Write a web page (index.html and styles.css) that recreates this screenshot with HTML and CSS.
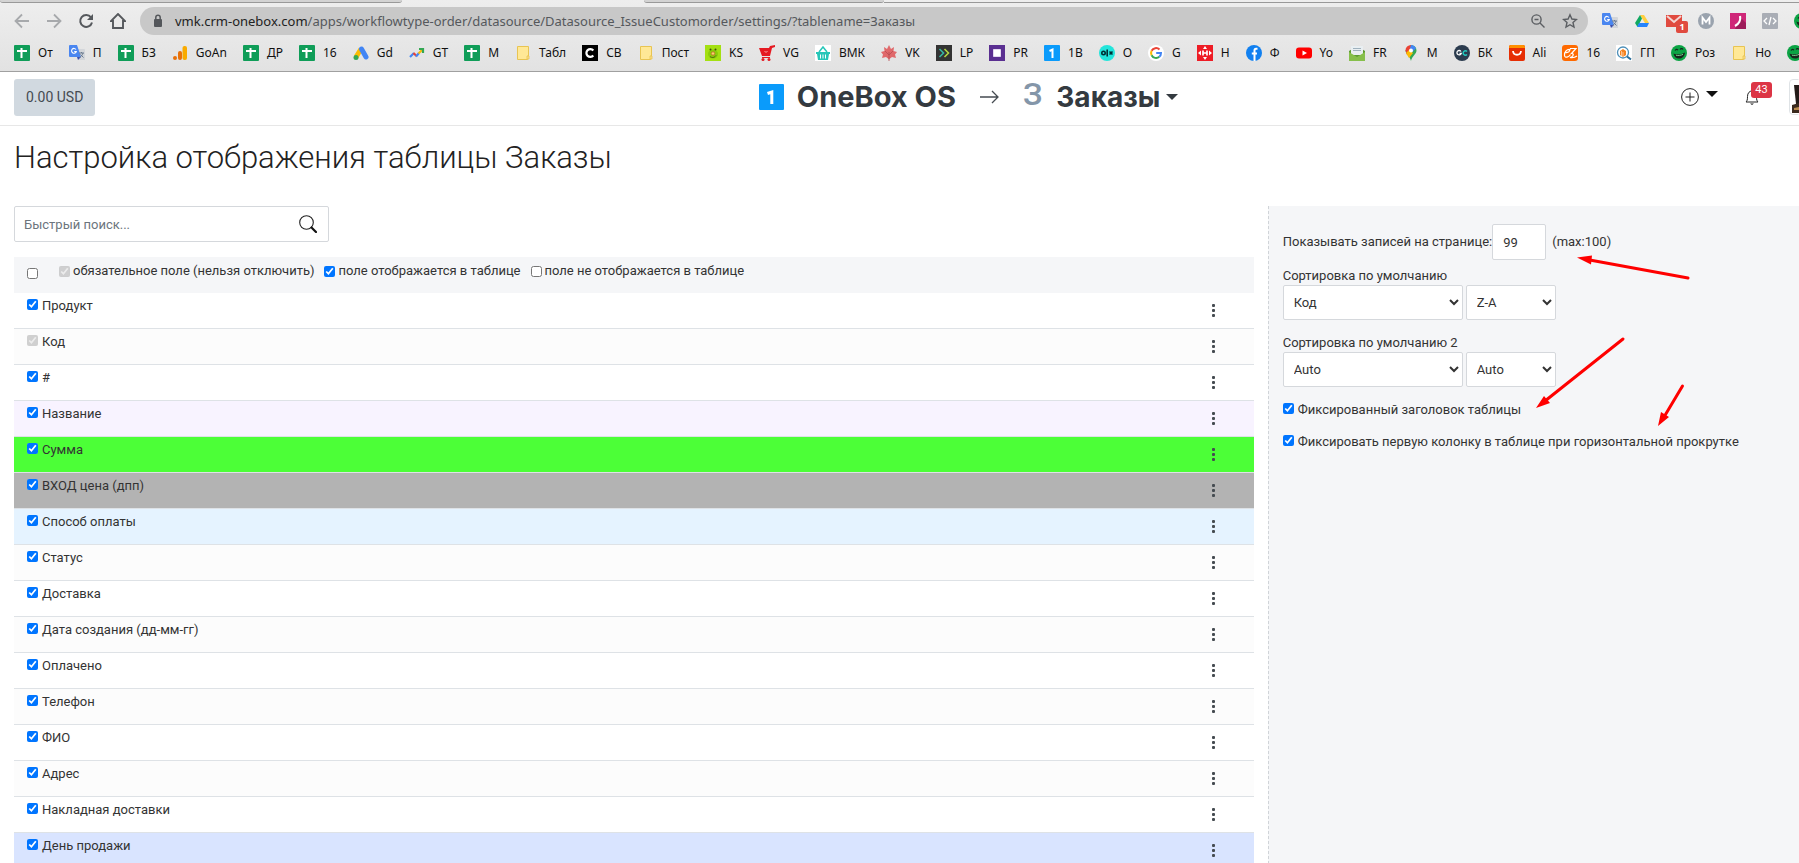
FILE: index.html
```html
<!DOCTYPE html>
<html lang="ru">
<head>
<meta charset="utf-8">
<title>Настройка отображения таблицы Заказы</title>
<link rel="stylesheet" href="styles.css">
</head>
<body>
<svg class="defs" aria-hidden="true">
  <symbol id="sheet" viewBox="0 0 16 16"><rect width="16" height="16" rx="1" fill="#0f9d58"/><path d="M3 6h10M7.500 3v10" stroke="#fff" stroke-width="2"/></symbol>
  <symbol id="note" viewBox="0 0 16 16"><path d="M2.500 1.500h11v9.500h-1v3.500h-10z" fill="#ffe896" stroke="#e8c452"/><path d="M12 11h2v3h-2z" fill="#ffe08a" stroke="#e8c452" stroke-width=".8"/></symbol>
  <symbol id="translate" viewBox="0 0 16 16"><path d="M7 4h8a1 1 0 0 1 1 1v10h-6z" fill="#d3d6da"/><path d="M1 0h7l4 12H1a1 1 0 0 1-1-1V1a1 1 0 0 1 1-1z" fill="#4a86f0"/><path d="M8 12h4l-3 3z" fill="#3a4fb0"/><path d="M7 4.500A2.400 2.400 0 1 0 7.300 6.500H5.200" fill="none" stroke="#fff" stroke-width="1.100"/><path d="M10 8h5M12.500 7v1M14 8c-.5 2-2 3.500-3.500 4.500M11.500 9.500l3 3" fill="none" stroke="#6a7a90"/></symbol>
  <symbol id="face" viewBox="0 0 16 16"><circle cx="8" cy="8" r="8" fill="#0ba344"/><path d="M2.500 8.500c3 1.500 8 1 11.500-1-.5 4-3 6-6 6s-5-2-5.500-5z" fill="#17251c"/><path d="M4 5.500c1-1.500 2-1.500 3-.3M9 4.500c1-1.300 2.500-1 3 0" fill="none" stroke="#17251c" stroke-width="1.200"/><path d="M5 10.200c2 .5 5 .2 7-.8" stroke="#7bd692" fill="none"/></symbol>
</svg>

<header class="browser">
  <div class="tabs"><i class="tab"></i><i class="tab-active"></i><i class="tab"></i><i class="tab-rest"></i></div>
  <div class="toolbar">
    <nav class="nav">
      <button class="plain" aria-label="Назад"><svg class="i16" viewBox="0 0 16 16" fill="none" stroke="#a7a9ac" stroke-width="1.800"><path d="M15 8H2M8 1.500L1.500 8 8 14.500"/></svg></button>
      <button class="plain" aria-label="Вперёд"><svg class="i16" viewBox="0 0 16 16" fill="none" stroke="#a7a9ac" stroke-width="1.800"><path d="M1 8h13M8 1.500L14.500 8 8 14.500"/></svg></button>
      <button class="plain" aria-label="Обновить"><svg class="i16" viewBox="0 0 16 16"><path d="M13 4.300A6 6 0 1 0 14 9.500" fill="none" stroke="#55585c" stroke-width="2"/><path d="M15 1v6H9z" fill="#55585c"/></svg></button>
      <button class="plain" aria-label="Домой"><svg class="i16" viewBox="0 0 16 16"><path d="M3 15V8H1l7-7 7 7h-2v7z" fill="none" stroke="#55585c" stroke-width="1.900"/></svg></button>
    </nav>
    <div class="address">
      <svg class="lock" viewBox="0 0 10 14"><rect x="1" y="5" width="8" height="8" rx="1" fill="#54575b"/><path d="M2.800 6V3.500a2.200 2.200 0 0 1 4.400 0V6" fill="none" stroke="#54575b" stroke-width="1.500"/></svg>
      <span class="url"><span class="host">vmk.crm-onebox.com</span>/apps/workflowtype-order/datasource/Datasource_IssueCustomorder/settings/?tablename=Заказы</span>
      <button class="plain" aria-label="Масштаб"><svg class="i16" viewBox="0 0 16 16" fill="none" stroke="#5b5e62" stroke-width="1.400"><circle cx="6.500" cy="6.500" r="4.600"/><path d="M10 10l4.500 4.500M4.500 6.500h4"/></svg></button>
      <button class="plain star" aria-label="В закладки"><svg class="i16" viewBox="0 0 16 16"><path d="M8 1.800l1.900 4.200 4.500.5-3.400 3 1 4.500L8 11.700 4 14l1-4.500-3.400-3L6.100 6z" fill="none" stroke="#5b5e62" stroke-width="1.400"/></svg></button>
    </div>
    <div class="extensions">
      <svg class="i16"><use href="#translate"/></svg>
      <svg class="i16" viewBox="0 0 16 16"><path d="M6 2h4l5 8h-4z" fill="#ffcf3f"/><path d="M6 2l2 3.500L3.500 14 1 10z" fill="#11a861"/><path d="M5 10h10l-2 4H3z" fill="#2684fc"/></svg>
      <span class="mail"><svg class="i16" viewBox="0 0 16 16"><path d="M0 2h16v12H0z" fill="#e04a3f"/><path d="M1 3l7 6 7-6" fill="none" stroke="#f3d5d2" stroke-width="2"/></svg><b class="mail-count">1</b></span>
      <svg class="i16" viewBox="0 0 16 16"><circle cx="8" cy="8" r="8" fill="#9aa3ae"/><path d="M4.500 11.500v-7L8 9l3.500-4.500v7" fill="none" stroke="#fff" stroke-width="1.800"/></svg>
      <svg class="i16" viewBox="0 0 16 16"><path d="M0 0h16v16H0z" fill="#cf2778"/><path d="M11 5l5 5v6H5z" fill="#9c1b59"/><path d="M10 3c1 4-1 8-5 10" fill="none" stroke="#fff" stroke-width="2.200"/></svg>
      <svg class="i16" viewBox="0 0 16 16"><rect width="16" height="16" rx="1" fill="#a9adb5"/><path d="M5 5L2 8l3 3M11 5l3 3-3 3M9 4l-2 8" fill="none" stroke="#fff" stroke-width="1.300"/></svg>
      <svg class="i16"><use href="#face"/></svg>
    </div>
  </div>
  <nav class="bookmarks">
    <a href="#"><svg class="i16"><use href="#sheet"/></svg>От</a>
    <a href="#"><svg class="i16"><use href="#translate"/></svg>П</a>
    <a href="#"><svg class="i16"><use href="#sheet"/></svg>БЗ</a>
    <a href="#"><svg class="i16" viewBox="0 0 16 16"><circle cx="3" cy="13" r="2" fill="#e8710a"/><rect x="6" y="6" width="4" height="9" rx="2" fill="#e8710a"/><rect x="10.500" y="1" width="4.500" height="14" rx="2" fill="#f9ab00"/></svg>GoAn</a>
    <a href="#"><svg class="i16"><use href="#sheet"/></svg>ДР</a>
    <a href="#"><svg class="i16"><use href="#sheet"/></svg>16</a>
    <a href="#"><svg class="i16" viewBox="0 0 16 16"><path d="M3 12L8 4" stroke="#fbbc04" stroke-width="5"/><path d="M8.500 4L13 12" stroke="#4285f4" stroke-width="5" stroke-linecap="round"/><circle cx="3" cy="12.500" r="2.500" fill="#34a853"/></svg>Gd</a>
    <a href="#"><svg class="i16" viewBox="0 0 16 16" fill="none" stroke-width="2.200"><path d="M1 12l4-4" stroke="#4285f4"/><path d="M4.500 8l3 3" stroke="#ea4335"/><path d="M7 11.500L10 8" stroke="#4285f4"/><path d="M9.500 8.500L13 5" stroke="#fbbc04"/><path d="M10 4h4v4" stroke="#34a853"/></svg>GT</a>
    <a href="#"><svg class="i16"><use href="#sheet"/></svg>М</a>
    <a href="#"><svg class="i16"><use href="#note"/></svg>Табл</a>
    <a href="#"><svg class="i16" viewBox="0 0 16 16"><path d="M0 0h16v16H0z"/><path d="M11.300 5.500A3.900 3.900 0 1 0 11.300 10.500" fill="none" stroke="#fff" stroke-width="2.200"/></svg>СВ</a>
    <a href="#"><svg class="i16"><use href="#note"/></svg>Пост</a>
    <a href="#"><svg class="i16" viewBox="0 0 16 16"><path d="M0 0h16v16H0z" fill="#a4e012"/><ellipse cx="8" cy="9" rx="5" ry="4.500" fill="#8acb0a"/><circle cx="8" cy="8.500" r="1.700" fill="#f5d76e" stroke="#c55b2b" stroke-width=".7"/><circle cx="5.500" cy="4.500" r="1" fill="#40500c"/><circle cx="10.500" cy="4.500" r="1" fill="#40500c"/><path d="M5 11.500c2 1.500 4 1.500 6-1" fill="none" stroke="#4a6512"/></svg>KS</a>
    <a href="#"><svg class="i16" viewBox="0 0 16 16"><path d="M0 3h10l1-2 5-1v2l-3 1-2 8H3z" fill="#e51a22"/><path d="M3 12h8v1H3z" fill="#e51a22"/><circle cx="4" cy="14.500" r="1.500" fill="#e51a22"/><circle cx="10" cy="14.500" r="1.500" fill="#e51a22"/><path d="M5.500 6l1.500 1.500L8.500 6" stroke="#f7a9ab" fill="none"/></svg>VG</a>
    <a href="#"><svg class="i16" viewBox="0 0 16 16"><path d="M0 0h16v16H0z" fill="#fff"/><path d="M1 7h14v2h-1l-1 6H3L2 9H1z" fill="#26c6b8"/><path d="M4 7l4-5 4 5" fill="none" stroke="#26c6b8" stroke-width="1.500"/><path d="M5.500 9.500v4M8 9.500v4M10.500 9.500v4" stroke="#fff"/></svg>ВМК</a>
    <a href="#"><svg class="i16" viewBox="0 0 16 16"><path d="M8 0l2 4 3-2-.5 4L16 7l-2 2.500 1 3.500-4-1-2 1.500-1 1-1-1L5 12l-4 1 1-3.500L0 7l3.500-1L3 2l3 2z" fill="#e0696b"/><path d="M8 16V7M8 10L4 6M8 10l4-4" stroke="#b74d50" stroke-width=".8"/></svg>VK</a>
    <a href="#"><svg class="i16" viewBox="0 0 16 16"><path d="M0 0h16v16H0z" fill="#333"/><path d="M3.500 4l4 4-4 4" fill="none" stroke="#35b6a4" stroke-width="1.600"/><path d="M8.500 4l4 4-4 4" fill="none" stroke="#b2d642" stroke-width="1.600"/></svg>LP</a>
    <a href="#"><svg class="i16" viewBox="0 0 16 16"><path d="M0 0h16v16H0z" fill="#5a2f91"/><path d="M4.500 4.500h7v7h-7z" fill="#fff" stroke="#e4daf0"/></svg>PR</a>
    <a href="#"><svg class="i16" viewBox="0 0 16 16"><rect width="16" height="16" rx="1" fill="#0a9bfb"/><path d="M5.500 6L8.500 4.500V13" fill="none" stroke="#fff" stroke-width="2"/></svg>1В</a>
    <a href="#"><svg class="i16" viewBox="0 0 16 16"><circle cx="8" cy="8" r="8" fill="#23e5db"/><circle cx="4.500" cy="8" r="1.700" fill="none" stroke="#002f34" stroke-width="1.600"/><path d="M8.200 4.500v7M10.500 6.500l3 3M10.500 9.500l3-3" stroke="#002f34" stroke-width="1.600"/></svg>O</a>
    <a href="#"><svg class="i16" viewBox="0 0 16 16"><circle cx="8" cy="8" r="8" fill="#fff"/><g fill="none" stroke-width="2"><path d="M11.500 4.500A5 5 0 0 0 3.600 5.800" stroke="#ea4335"/><path d="M3.600 5.800a5 5 0 0 0 0 4.400" stroke="#fbbc05"/><path d="M3.600 10.200a5 5 0 0 0 7.700 1.600" stroke="#34a853"/><path d="M11.300 11.800A5 5 0 0 0 13 8H8.200" stroke="#4285f4"/></g></svg>G</a>
    <a href="#"><svg class="i16" viewBox="0 0 16 16"><path d="M0 0h16v16H0z" fill="#ee1c25"/><path d="M6 5.500v5M10 5.500v5M6 8h4" stroke="#fff" stroke-width="1.700"/><path d="M8 1l2 3H6zM8 15l2-3H6zM1 8l3-2.500v5zM15 8l-3-2.500v5z" fill="#fff"/></svg>H</a>
    <a href="#"><svg class="i16" viewBox="0 0 16 16"><circle cx="8" cy="8" r="8" fill="#1180f0"/><path d="M11.500 3.800H10Q8.500 3.800 8.500 5.500V16M5.800 8.500h5.200" fill="none" stroke="#fff" stroke-width="2"/></svg>Ф</a>
    <a href="#"><svg class="i16" viewBox="0 0 16 16"><rect y="2.500" width="16" height="11" rx="3" fill="#f00"/><path d="M6.500 5.500v5L11 8z" fill="#fff"/></svg>Yo</a>
    <a href="#"><svg class="i16" viewBox="0 0 16 16"><path d="M0 6l8-5 8 5v10H0z" fill="#5d9b32"/><path d="M2 1h12v9H2z" fill="#e9eff2"/><path d="M4 3.500h8M4 5.500h8" stroke="#9fb1bd"/><path d="M0 7l8 5 8-5v9H0z" fill="#86bf4b"/></svg>FR</a>
    <a href="#"><svg class="i16" viewBox="0 0 16 16"><path d="M8 0a5.500 5.500 0 0 1 5.500 5.500C13.500 9 9 11 8 16 7 11 2.500 9 2.500 5.500z" fill="#34a853"/><path d="M2.500 5.500A5.500 5.500 0 0 1 8 0l1 5-5 5z" fill="#ea4335"/><path d="M8 0a5.500 5.500 0 0 1 5 3.500L8 8 7 3z" fill="#4285f4"/><path d="M3 8l3-3 4 3-4 5z" fill="#fbbc04"/><circle cx="8" cy="5.500" r="2" fill="#fff"/></svg>М</a>
    <a href="#"><svg class="i16" viewBox="0 0 16 16"><circle cx="8" cy="8" r="8" fill="#2b3b4e"/><path d="M7 6.500A2.200 2.200 0 1 0 7.200 8.500H5.500" fill="none" stroke="#fff" stroke-width="1.300"/><path d="M13 6.500a2.200 2.200 0 1 0 0 3" fill="none" stroke="#22c7bd" stroke-width="1.500"/></svg>БК</a>
    <a href="#"><svg class="i16" viewBox="0 0 16 16"><rect width="16" height="16" rx="2" fill="#e62e04"/><path d="M0 3V2a2 2 0 0 1 2-2h12a2 2 0 0 1 2 2v1z" fill="#ff9000"/><path d="M4 6c.5 5 7.500 5 8 0" fill="none" stroke="#fff" stroke-width="1.800"/></svg>Ali</a>
    <a href="#"><svg class="i16" viewBox="0 0 16 16"><rect width="16" height="16" rx="3" fill="#ff6a00"/><path d="M3.500 7.500c3 .5 4-.5 4.500-3C5 4 2 7 2.500 10.500 3 13.500 7 12 8.500 9.500M8 3.500h6L9.500 8.500c3 0 2 3-1.500 4 3 .5 5 0 7-1.500" fill="none" stroke="#fff" stroke-width="1.200"/></svg>16</a>
    <a href="#"><svg class="i16" viewBox="0 0 16 16"><path d="M0 0h16v16H0z" fill="#fff"/><circle cx="7" cy="7.500" r="5.500" fill="none" stroke="#4d8fb8" stroke-width="1.300"/><path d="M11 11.500l4 3" stroke="#2a6f9c" stroke-width="2"/><path d="M4 6l3-2 3 2v4l-3 2-3-2z" fill="#f58220"/><path d="M7 7v5M5.500 6v5" stroke="#ffd7ae" stroke-width=".8"/></svg>ГП</a>
    <a href="#"><svg class="i16"><use href="#face"/></svg>Роз</a>
    <a href="#"><svg class="i16"><use href="#note"/></svg>Но</a>
    <a href="#" aria-label="Розетка"><svg class="i16"><use href="#face"/></svg></a>
  </nav>
</header>

<header class="app">
  <div><button class="balance">0.00 USD</button></div>
  <div class="brand">
    <svg class="logo" viewBox="0 0 25 26"><rect width="25" height="26" rx="1" fill="#0a9bfb"/><path d="M8.500 9.500L12.800 8V20" fill="none" stroke="#fff" stroke-width="3"/></svg>
    <a href="#" class="brand-name">OneBox OS</a>
    <svg class="arrow" viewBox="0 0 19 14"><path d="M0 7h18M12 1l6 6-6 6" fill="none" stroke="#454b51" stroke-width="1.300"/></svg>
    <span class="initial">З</span>
    <button class="plain brand-name section">Заказы<svg class="caret" viewBox="0 0 12 6"><path d="M0 0h12L6 6z" fill="#343a40"/></svg></button>
  </div>
  <div class="actions">
    <button class="plain add" aria-label="Добавить"><svg class="plus" viewBox="0 0 18 18" fill="none" stroke="#222"><circle cx="9" cy="9" r="8.400"/><path d="M9 4.500v9M4.500 9h9"/></svg><svg class="caret-up" viewBox="0 0 12 6"><path d="M0 0h12L6 6z" fill="#111"/></svg></button>
    <button class="plain bell" aria-label="Уведомления"><svg class="i16" viewBox="0 0 16 16"><path d="M2 13c1-1 1.500-2 1.500-5.500C3.500 4 5.500 2 8 2s4.500 2 4.500 5.500c0 3.500.5 4.500 1.500 5.500z" fill="none" stroke="#222"/><path d="M6 14.500h4L8 16z" fill="#222"/></svg><span class="count">43</span></button>
    <svg class="avatar" viewBox="0 0 10 36"><path d="M9.500.5H4Q.5.500.5 4v28Q.5 35.500 4 35.500h5.500" fill="#fff" stroke="#dfe3e6"/><path d="M5 6h5v19H7z" fill="#241b18"/><path d="M3 26l7-2v10H3z" fill="#3a2a1e"/><path d="M5 29l5-1v3H5z" fill="#b98a4c"/></svg>
  </div>
</header>

<main class="page">
  <h1>Настройка отображения таблицы Заказы</h1>
  <div class="columns">
    <section class="fields">
      <form class="search">
        <input type="text" placeholder="Быстрый поиск..." aria-label="Быстрый поиск">
        <button type="button" class="plain" aria-label="Найти"><svg class="lens" viewBox="0 0 18 18"><circle cx="7.500" cy="7.500" r="6.800" fill="none" stroke="#222" stroke-width="1.100"/><path d="M12.500 12.500l4.500 4.500" stroke="#111" stroke-width="2.200" stroke-linecap="round"/></svg></button>
      </form>
      <div class="legend">
        <input type="checkbox" class="all" aria-label="Выбрать все">
        <label><input type="checkbox" checked disabled>обязательное поле (нельзя отключить)</label>
        <label><input type="checkbox" checked>поле отображается в таблице</label>
        <label><input type="checkbox">поле не отображается в таблице</label>
      </div>
      <ul class="rows">
        <li><label><input type="checkbox" checked>Продукт</label><button class="plain dots" aria-label="Меню"><i></i><i></i><i></i></button></li>
        <li><label><input type="checkbox" checked disabled>Код</label><button class="plain dots" aria-label="Меню"><i></i><i></i><i></i></button></li>
        <li><label><input type="checkbox" checked>#</label><button class="plain dots" aria-label="Меню"><i></i><i></i><i></i></button></li>
        <li class="lilac"><label><input type="checkbox" checked>Название</label><button class="plain dots" aria-label="Меню"><i></i><i></i><i></i></button></li>
        <li class="green"><label><input type="checkbox" checked>Сумма</label><button class="plain dots" aria-label="Меню"><i></i><i></i><i></i></button></li>
        <li class="gray"><label><input type="checkbox" checked>ВХОД цена (дпп)</label><button class="plain dots" aria-label="Меню"><i></i><i></i><i></i></button></li>
        <li class="sky"><label><input type="checkbox" checked>Способ оплаты</label><button class="plain dots" aria-label="Меню"><i></i><i></i><i></i></button></li>
        <li><label><input type="checkbox" checked>Статус</label><button class="plain dots" aria-label="Меню"><i></i><i></i><i></i></button></li>
        <li><label><input type="checkbox" checked>Доставка</label><button class="plain dots" aria-label="Меню"><i></i><i></i><i></i></button></li>
        <li><label><input type="checkbox" checked>Дата создания (дд-мм-гг)</label><button class="plain dots" aria-label="Меню"><i></i><i></i><i></i></button></li>
        <li><label><input type="checkbox" checked>Оплачено</label><button class="plain dots" aria-label="Меню"><i></i><i></i><i></i></button></li>
        <li><label><input type="checkbox" checked>Телефон</label><button class="plain dots" aria-label="Меню"><i></i><i></i><i></i></button></li>
        <li><label><input type="checkbox" checked>ФИО</label><button class="plain dots" aria-label="Меню"><i></i><i></i><i></i></button></li>
        <li><label><input type="checkbox" checked>Адрес</label><button class="plain dots" aria-label="Меню"><i></i><i></i><i></i></button></li>
        <li><label><input type="checkbox" checked>Накладная доставки</label><button class="plain dots" aria-label="Меню"><i></i><i></i><i></i></button></li>
        <li class="blue"><label><input type="checkbox" checked>День продажи</label><button class="plain dots" aria-label="Меню"><i></i><i></i><i></i></button></li>
      </ul>
    </section>

    <aside class="panel">
      <div class="per-page">
        <label for="count">Показывать записей на странице:</label>
        <input type="text" id="count" value="99">
        <span class="limit">(max:100)</span>
      </div>
      <div class="sort">
        <label for="sort1">Сортировка по умолчанию</label>
        <div class="selects">
          <select id="sort1" class="wide"><option>Код</option></select>
          <select aria-label="Направление"><option>Z-A</option></select>
        </div>
      </div>
      <div class="sort">
        <label for="sort2">Сортировка по умолчанию 2</label>
        <div class="selects">
          <select id="sort2" class="wide"><option>Auto</option></select>
          <select aria-label="Направление 2"><option>Auto</option></select>
        </div>
      </div>
      <label class="option"><input type="checkbox" checked>Фиксированный заголовок таблицы</label>
      <label class="option"><input type="checkbox" checked>Фиксировать первую колонку в таблице при горизонтальной прокрутке</label>
      <svg class="marks" viewBox="0 0 530 240" fill="#f00" stroke="#f00" stroke-width="3" stroke-linecap="round">
        <path d="M419 72L318 53.500M354 133L276 195M413.500 180L395 211"/>
        <path d="M308 51.500l15-2-1 9zM267 202l8-12 6 7zM389 220l3-14 8 5z" stroke="none"/>
      </svg>
    </aside>
  </div>
</main>
</body>
</html>
```
FILE: styles.css
```css
* { box-sizing: border-box; }
body {
  margin: 0;
  height: 100vh;
  overflow: hidden;
  display: flex;
  flex-direction: column;
  background: #fff;
  color: #333;
  font: 13px/18px Roboto, sans-serif;
}
.defs { display: none; }
button, input, select { font: inherit; color: inherit; }
svg { display: block; flex: none; }
.plain { border: 0; padding: 0; background: none; display: flex; }
.i16 { width: 16px; height: 16px; }
input[type="checkbox"] { width: 11px; height: 11px; margin: 0; flex: none; }

/* browser chrome */
.browser {
  flex: none;
  background: linear-gradient(#eee, #e2e2e2);
  border-bottom: 1px solid #a0a0a0;
  font-family: "Noto Sans", sans-serif;
  color: #222;
}
.tabs { display: grid; grid-template-columns: 402fr 242fr 240fr 915fr; height: 3px; }
.tab { background: #d3d3d3; border-bottom: 1px solid #999; border-radius: 0 0 4px 4px; }
.tab-rest { border-bottom: 1px solid #999; }
.toolbar { display: flex; align-items: center; padding: 4px 0; }
.nav { display: flex; gap: 16px; padding: 0 14px; }
.address {
  flex: 1;
  display: flex;
  align-items: center;
  gap: 12px;
  height: 28px;
  padding: 0 10px 0 13px;
  border-radius: 14px;
  background: #c8c8c8;
}
.star { margin-left: 4px; }
.lock { width: 10px; height: 14px; }
.url { flex: 1; font-size: 13px; color: #55585c; white-space: nowrap; }
.host { color: #222; }
.extensions {
  display: flex;
  align-items: center;
  gap: 16px;
  width: 197px;
  height: 28px;
  margin-left: 14px;
  overflow: hidden;
}
.mail { position: relative; }
.mail-count {
  position: absolute;
  left: 10px;
  top: 8px;
  width: 12px;
  height: 12px;
  border-radius: 2px;
  background: #e04a3f;
  color: #fff;
  font-size: 9px;
  line-height: 12px;
  text-align: center;
}
.bookmarks { display: flex; height: 32px; padding: 0 0 4px 14px; gap: 16px; overflow: hidden; }
.bookmarks a {
  display: flex;
  flex: none;
  align-items: center;
  align-self: center;
  gap: 8px;
  height: 16px;
  color: #111;
  font-size: 12px;
  text-decoration: none;
}

/* application header */
.app {
  flex: none;
  display: grid;
  grid-template-columns: 6fr auto 5fr;
  align-items: center;
  height: 54px;
  padding: 0 0 3px 14px;
  border-bottom: 1px solid #e7e7e7;
}
.balance {
  display: block;
  height: 37px;
  padding: 0 12px;
  border: 0;
  border-radius: 3px;
  background: #d1d9e0;
  color: #454b52;
  font-size: 14px;
}
.brand { display: flex; align-items: center; }
.logo { width: 25px; height: 26px; margin-right: 13px; }
.brand-name { color: #343a40; font: 700 29px/34px Inter, sans-serif; text-decoration: none; }
.arrow { width: 19px; height: 14px; margin: 0 24px; }
.initial { color: #8496a9; font: 500 32px/34px Roboto, sans-serif; margin-right: 14px; padding-bottom: 6px; }
.section { align-items: center; gap: 6px; font-size: 28px; }
.caret { width: 12px; height: 6px; }
.actions { display: flex; align-items: center; justify-content: flex-end; }
.add { gap: 7px; margin-right: 26px; }
.plus { width: 18px; height: 18px; }
.caret-up { width: 12px; height: 6px; margin-top: 3px; }
.bell { position: relative; margin-right: 29px; }
.count {
  position: absolute;
  left: 7px;
  top: -7px;
  width: 21px;
  height: 16px;
  border-radius: 3px;
  background: #dc3545;
  color: #fff;
  font-size: 11px;
  line-height: 16px;
}
.avatar { width: 10px; height: 36px; }

/* page */
.page { flex: 1; min-height: 0; display: flex; flex-direction: column; padding-left: 14px; }
h1 { margin: 12px 0 28px; color: #222; font-size: 31px; font-weight: 300; line-height: 40px; }
.columns { flex: 1; min-height: 0; display: grid; grid-template-columns: 7fr 3fr; column-gap: 14px; }
.search {
  display: flex;
  align-items: center;
  width: 315px;
  height: 36px;
  margin-bottom: 15px;
  padding-right: 11px;
  border: 1px solid #d5d8dc;
  border-radius: 2px;
}
.search input { flex: 1; height: 34px; border: 0; padding: 0 9px; background: none; }
.search input::placeholder { color: #6c757d; }
.lens { width: 18px; height: 18px; }
.legend { display: flex; gap: 10px; height: 36px; padding: 5px 13px; background: #f5f6f8; }
.legend .all { margin: 6px 11px 0 0; }
.legend label { display: flex; align-items: center; gap: 3px; height: 18px; }
.rows { margin: 0; padding: 0; list-style: none; }
.rows li {
  display: flex;
  justify-content: space-between;
  height: 36px;
  padding: 4px 39px 0 13px;
  border-bottom: 1px solid #dee2e6;
}
.rows li:nth-child(even) { background: #fcfcfc; }
.rows label { display: flex; gap: 4px; height: 18px; }
.rows input { margin-top: 2px; }
.rows li.lilac { background: #f8f3ff; }
.rows li.green { background: #4cff37; }
.rows li.gray { background: #b3b3b3; }
.rows li.sky { background: #e5f3ff; }
.rows li.blue { background: #d9e4ff; }
.dots { flex-direction: column; gap: 2px; padding-top: 7px; }
.dots i { width: 3px; height: 3px; border-radius: 1px; background: #454b51; }

/* side panel */
.panel { position: relative; padding: 18px 14px 0; background: #f5f6f8; border-left: 1px dashed #d0d4d8; }
.per-page { display: flex; align-items: center; margin-bottom: 7px; }
.per-page input { width: 54px; height: 36px; padding: 0 10px; border: 1px solid #d5d8dc; border-radius: 2px; background: #fff; }
.limit { margin-left: 6px; }
.sort { margin-bottom: 14px; }
.sort label { display: block; }
.selects { display: flex; gap: 3px; }
.selects select { width: 90px; height: 35px; padding: 0 6px; border: 1px solid #d5d8dc; border-radius: 2px; background: #fff; }
.selects .wide { width: 180px; }
.option { display: flex; gap: 4px; margin-bottom: 14px; }
.option input { margin-top: 2px; }
.marks { position: absolute; left: 0; top: 0; width: 530px; height: 240px; }
```
